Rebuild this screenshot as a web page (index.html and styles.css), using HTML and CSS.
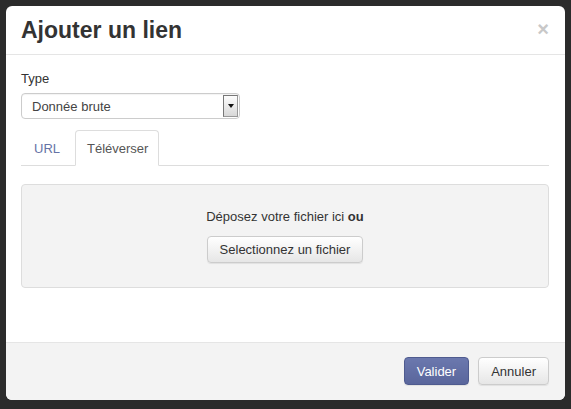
FILE: index.html
```html
<!DOCTYPE html>
<html lang="fr">
<head>
<meta charset="utf-8">
<title>Ajouter un lien</title>
<link rel="stylesheet" href="styles.css">
</head>
<body>
<div class="backdrop">
  <div class="modal">
    <div class="modal-header">
      <h3 class="modal-title">Ajouter un lien</h3>
      <span class="close">&times;</span>
    </div>
    <div class="modal-body">
      <label class="label">Type</label>
      <div class="select">
        <span class="select-text">Donnée brute</span>
        <span class="select-arrow"><span class="tri"></span></span>
      </div>
      <ul class="tabs">
        <li class="tab">URL</li>
        <li class="tab active">Téléverser</li>
      </ul>
      <div class="dropzone">
        <p class="drop-text">Déposez votre fichier ici <b>ou</b></p>
        <button class="btn">Selectionnez un fichier</button>
      </div>
    </div>
    <div class="modal-footer">
      <button class="btn btn-primary">Valider</button>
      <button class="btn">Annuler</button>
    </div>
  </div>
</div>
</body>
</html>
```
FILE: styles.css
```css
html, body {
  margin: 0;
  padding: 0;
  height: 100%;
}
body {
  background: #2b2b2b;
  font-family: "Liberation Sans", Arial, sans-serif;
  font-size: 13px;
  color: #333;
}
.backdrop {
  padding: 6px;
}
.modal {
  width: 559px;
  height: 394px;
  background: #fff;
  border-radius: 6px;
  display: flex;
  flex-direction: column;
  overflow: hidden;
}
.modal-header {
  border-bottom: 1px solid #e5e5e5;
  display: flex;
  align-items: flex-start;
  justify-content: space-between;
  padding: 0 16px 0 15px;
  box-sizing: border-box;
  height: 49px;
}
.modal-title {
  margin: 0;
  padding-top: 11px;
  font-size: 23px;
  font-weight: bold;
  line-height: 26px;
  color: #333;
}
.close {
  margin-top: 13px;
  font-size: 20px;
  font-weight: bold;
  color: #c8c8c8;
  line-height: 20px;
}
.modal-body {
  flex: 1;
  padding: 15px 15px 0 15px;
}
.label {
  display: block;
  line-height: 18px;
  margin-bottom: 5px;
}
.select {
  width: 219px;
  height: 26px;
  box-sizing: border-box;
  border: 1px solid #ccc;
  border-radius: 4px;
  display: flex;
  align-items: center;
  justify-content: space-between;
  padding: 0 1px 0 10px;
  box-shadow: inset 0 1px 1px rgba(0,0,0,0.05);
}
.select-text {
  color: #444;
}
.select-arrow {
  width: 15px;
  height: 22px;
  box-sizing: border-box;
  border: 1px solid #777;
  border-right-color: #999;
  border-bottom-color: #999;
  background: linear-gradient(#fdfdfd, #d8d8d8);
  display: flex;
  align-items: center;
  justify-content: center;
}
.tri {
  width: 0;
  height: 0;
  border-left: 3px solid transparent;
  border-right: 3px solid transparent;
  border-top: 4px solid #111;
}
.tabs {
  list-style: none;
  margin: 11px 0 0 0;
  padding: 0;
  display: flex;
  border-bottom: 1px solid #ddd;
  width: 528px;
}
.tab {
  padding: 10px 12px 9px 12px;
  line-height: 15px;
  color: #6673a6;
  margin-right: 2px;
  margin-bottom: -1px;
  border: 1px solid transparent;
  border-radius: 4px 4px 0 0;
}
.tab.active {
  color: #555;
  background: #fff;
  border-color: #ddd;
  border-bottom-color: #fff;
  padding: 10px 10px 9px 11px;
}
.dropzone {
  margin-top: 18px;
  width: 528px;
  height: 104px;
  box-sizing: border-box;
  background: #f3f3f3;
  border: 1px solid #ddd;
  border-radius: 4px;
  display: flex;
  flex-direction: column;
  align-items: center;
  padding-top: 23px;
}
.drop-text {
  margin: 0 0 10px 0;
  line-height: 18px;
}
.btn {
  font-family: "Liberation Sans", Arial, sans-serif;
  font-size: 13px;
  color: #333;
  height: 27px;
  padding: 0 12px;
  border: 1px solid #ccc;
  border-radius: 4px;
  background: linear-gradient(#fff, #e6e6e6);
  box-shadow: 0 1px 1px rgba(0,0,0,0.075);
  cursor: pointer;
}
.modal-footer {
  height: 58px;
  box-sizing: border-box;
  border-top: 1px solid #e5e5e5;
  background: #f3f3f3;
  display: flex;
  justify-content: flex-end;
  align-items: flex-start;
  gap: 9px;
  padding: 14px 16px 0 0;
}
.modal-footer .btn {
  height: 28px;
}
.btn-primary {
  color: #fff;
  background: linear-gradient(#6b78ae, #5a669c);
  border-color: #4f5b8f;
}
```
